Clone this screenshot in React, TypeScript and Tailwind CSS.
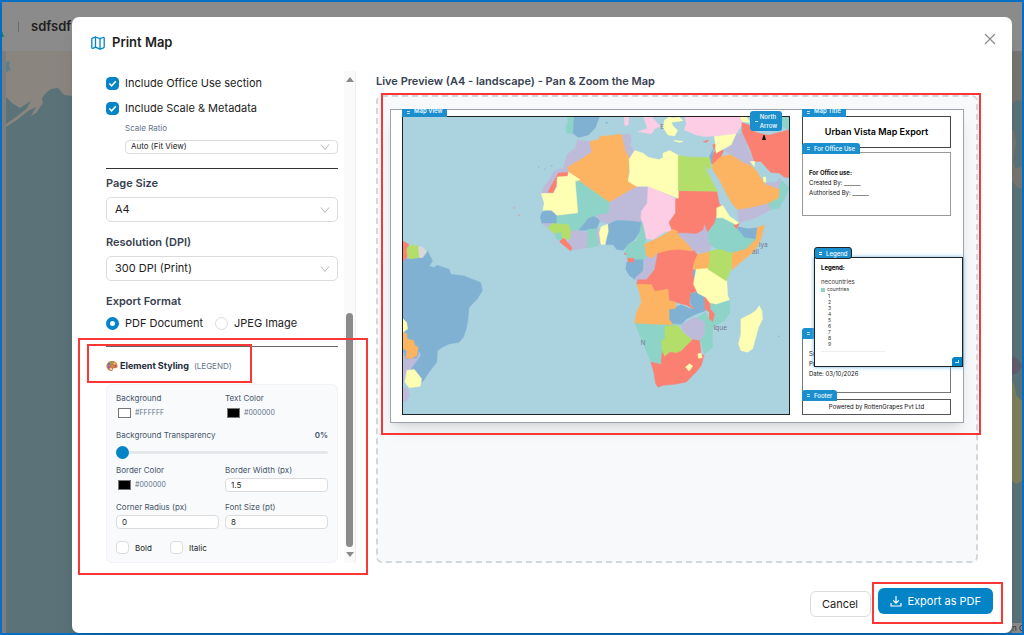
import { useState } from "react";

// Countries on a 3x grid of the map frame, in drawing order.
const COUNTRIES: { fill: string; shapes: string[] }[] = [
  {
    fill: "#80b1d3",
    shapes: [
      "M66 510L110 505 140 485 155 515 145 530 160 535 168 528 205 540 210 555 250 560 275 570 300 580 305 605 290 630 265 655 262 690 258 715 248 745 235 760 205 765 185 775 170 785 168 820 145 850 125 880 90 850 66 840Z",
      "M580 76L660 76 645 115 625 135 595 143 578 130Z",
      "M485 370L498 361 510 362 530 378 532 402 485 402 480 382Z",
      "M595 425L605 400 622 388 640 378 660 392 650 418 622 422Z",
      "M683 405L710 392 745 393 785 395 790 410 765 450 745 465 730 483 710 480 700 466 678 465Z",
      "M1076 412L1105 418 1135 415 1130 450 1095 445 1075 425Z",
      "M740 520L760 505 790 510 790 545 765 571 748 558 738 540Z",
      "M868 660L905 648 930 658 945 660 932 640 932 612 955 610 982 625 978 665 950 675 920 690 905 707 880 707 868 695Z",
      "M938 543L955 540 950 570 940 570Z",
      "M990 200L1000 180 1003 205 996 222Z",
    ],
  },
  {
    fill: "#8dd3c7",
    shapes: [
      "M560 76L580 76 578 130 560 130 557 108 564 95Z",
      "M1208 76L1235 76 1235 122 1210 110Z",
      "M1165 335L1198 325 1200 298 1198 275 1210 275 1230 295 1215 330 1200 355 1175 360Z",
      "M585 273L600 268 690 335 688 370 650 378 625 385 605 410 590 425 570 425 568 405 530 402 530 377 593 370Z",
      "M1010 385L1030 382 1065 395 1068 415 1080 425 1095 445 1132 450 1100 480 1060 492 1020 484 990 465 985 430 1000 410Z",
      "M785 398L797 410 800 440 793 470 803 490 812 510 743 510 735 485 745 465 770 455 780 430Z",
      "M622 420L652 418 655 470 620 476Z",
      "M990 645L1012 645 1050 635 1052 670 1035 695 1000 715 998 760 1000 775 975 795 962 752 975 735 975 700 950 690 978 670 990 690Z",
      "M765 702L830 705 905 705 880 712 856 712 856 750 846 752 846 822 825 827 812 815 795 775Z",
    ],
  },
  {
    fill: "#bebada",
    shapes: [
      "M66 790L75 812 108 808 115 790 119 800 90 840 75 860 66 885Z",
      "M66 895L80 900 87 920 78 935 66 942Z",
      "M592 150L632 155 635 187 600 210 565 232 565 248 530 262 520 290 503 310 483 310 495 285 505 275 520 245 550 235 560 195 585 175Z",
      "M725 135L752 132 755 155 750 165 762 182 748 207 735 180Z",
      "M1070 133L1090 130 1102 150 1102 170 1123 215 1115 227 1090 218 1055 195 1033 182 1058 165Z",
      "M1075 360L1120 352 1165 338 1175 360 1130 385 1078 400Z",
      "M1160 280L1190 278 1205 265 1200 292 1185 297 1165 290Z",
      "M690 335L770 288 807 292 803 340 785 365 783 397 745 392 710 390 685 402 660 395 650 378 688 370Z",
      "M895 435L920 428 950 432 970 422 972 403 985 427 985 455 995 470 990 487 960 490 930 480Z",
      "M570 425L600 423 622 430 620 475 575 483 565 460Z",
      "M650 420L663 422 664 463 654 465Z",
      "M485 402L515 402 500 415Z",
      "M795 510L815 490 835 490 827 530 800 572 770 577 765 567 790 545Z",
      "M905 707L945 685 975 700 975 735 962 752 935 752 910 725Z",
    ],
  },
  {
    fill: "#fccde5",
    shapes: [
      "M732 76L748 76 745 105 735 107Z",
      "M790 76L812 76 842 110 825 116 815 132 775 125 803 116Z",
      "M915 76L1090 76 1087 105 1070 132 1040 135 1005 138 975 140 950 135 915 120 920 100Z",
      "M805 290L888 326 888 370 868 395 875 425 855 428 820 450 800 448 790 402 783 385 785 365 803 340Z",
    ],
  },
  {
    fill: "#fb8072",
    shapes: [
      "M66 455L83 465 78 505 66 515Z",
      "M1088 98L1110 105 1130 128 1170 135 1200 128 1235 118 1235 265 1215 262 1200 250 1175 248 1145 215 1125 215 1115 185 1100 150 1088 125Z",
      "M1002 190L1010 180 1033 182 1025 200 1010 222 998 222ZM1000 165L1010 162 1004 182Z",
      "M971 155L988 151 980 158Z",
      "M535 250L565 248 565 261 531 262 528 290 518 310 503 308 515 285Z",
      "M896 303L1012 305 1020 345 1032 350 1010 380 1005 400 985 427 975 403 970 422 950 432 920 430 900 430 885 437 868 400 888 370 888 328 896 326Z",
      "M1063 407L1080 402 1072 418Z",
      "M538 457L550 443 575 475 572 485Z",
      "M743 507L762 507 762 518 745 518Z",
      "M835 488L880 477 945 485 958 500 955 520 940 545 940 560 952 607 932 612 930 645 945 660 920 648 890 640 868 633 865 600 825 607 815 587 770 585 775 572 800 572 825 540Z",
      "M975 625L990 625 992 660 1005 675 1000 697 990 690 990 670 977 660Z",
      "M813 820L844 827 848 785 855 802 870 790 905 785 938 752 960 755 965 795 974 800 965 830 950 850 920 880 885 887 850 890 835 896 828 885 822 850Z",
    ],
  },
  {
    fill: "#fdb462",
    shapes: [
      "M66 728L78 735 78 750 98 755 102 770 112 775 108 800 90 810 75 807 78 785 66 780Z",
      "M630 155L660 140 725 133 735 180 748 205 745 275 770 290 688 337 565 250 563 232 600 210 635 187Z",
      "M998 225L1025 200 1055 195 1090 218 1115 228 1130 240 1145 265 1160 285 1200 298 1198 325 1165 342 1120 352 1075 360 1060 345 1040 310 1020 270 1000 240Z",
      "M1135 413L1156 408 1145 450 1125 485 1080 522 1058 542 1055 507 1060 490 1100 480 1130 450Z",
      "M955 495L990 488 992 520 986 540 940 540 945 515Z",
      "M795 465L815 455 842 443 880 420 893 425 895 437 925 465 940 485 900 480 870 482 830 492 820 505 800 500Z",
      "M770 585L815 587 825 607 865 600 868 635 888 640 888 658 868 660 868 690 880 707 820 705 765 702 770 670 785 640 780 610Z",
    ],
  },
  {
    fill: "#ffffb3",
    shapes: [
      "M66 690L77 700 80 720 66 730Z",
      "M78 845L100 842 122 870 118 893 85 897 72 880Z",
      "M855 90L868 82 880 84 900 82 910 92 875 97 880 108 894 122 885 138 865 135 850 112ZM882 152L910 154 900 158Z",
      "M1080 76L1102 82 1112 97 1090 95Z",
      "M1005 140L1070 132 1055 165 1030 178 1010 190 1008 160Z",
      "M1113 215L1127 215 1125 230ZM1153 262L1160 262 1160 278 1153 275Z",
      "M748 208L765 182 790 190 805 202 838 210 850 203 850 190 870 182 897 197 896 326 805 290 770 290 745 275 750 245Z",
      "M483 312L520 311 531 290 531 262 563 260 565 247 600 270 585 275 593 370 530 377 515 362 488 362 492 340Z",
      "M1012 355L1030 347 1050 380 1078 400 1070 405 1030 385 1012 385Z",
      "M664 412L683 404 685 425 675 465 663 465 658 430Z",
      "M950 540L988 538 1042 575 1045 620 1050 632 1010 645 990 640 980 625 955 612 942 585Z",
      "M1140 650L1148 665 1150 690 1138 715 1120 780 1105 790 1085 785 1078 765 1085 735 1085 690 1115 675 1130 665Z",
      "M918 835L930 825 940 832 928 847ZM955 795L965 793 968 807 957 808Z",
    ],
  },
  {
    fill: "#b3de69",
    shapes: [
      "M78 475L92 467 113 470 115 505 85 508 78 495Z",
      "M896 198L935 202 990 203 995 235 985 238 972 218 980 240 1014 305 896 303Z",
      "M503 415L515 402 565 405 572 425 568 450 545 445 530 440Z",
      "M990 485L1020 480 1058 492 1055 540 1040 575 986 540 992 510Z",
      "M856 712L895 710 915 735 938 752 905 785 890 792 870 788 855 802 848 785 845 755 856 750Z",
    ],
  },
  { fill: "#d9d9d9", shapes: ["M113 470L128 475 138 488 125 505 115 505Z"] },
  { fill: "#8dd3c7", shapes: ["M525 432L543 430 545 450 530 452Z"] },
  { fill: "#aad3df", shapes: ["M1130 76L1190 76 1192 125 1170 134 1140 128Z", "M632 138L660 134 655 148 632 152Z"] },
];

const WorldMap = () => (
  <svg viewBox="66 81 1164 894" preserveAspectRatio="xMidYMid slice" className="absolute inset-0 h-full w-full bg-[#aad3df]">
    {COUNTRIES.map((c, i) => (
      <path key={i} d={c.shapes.join("")} fill={c.fill} stroke={c.fill} strokeWidth="1.5" strokeLinejoin="round" />
    ))}
    <g fill="#fb8072">
      <circle cx="401" cy="355" r="2" />
      <circle cx="416" cy="377" r="2" />
      <circle cx="736" cy="493" r="3" />
    </g>
    <g fill="#80b1d3">
      <circle cx="475" cy="231" r="2" />
      <circle cx="494" cy="238" r="2" />
      <circle cx="515" cy="228" r="2" />
      <circle cx="680" cy="98" r="3" />
      <circle cx="1199" cy="742" r="2" />
    </g>
    <g fill="#77748c" fontFamily="Noto Sans, sans-serif" fontSize="20">
      <text x="1139" y="473">iya</text>
      <text x="1118" y="494">all</text>
      <text x="1002" y="724">ique</text>
      <text x="782" y="768">N</text>
      <text x="842" y="116">E</text>
    </g>
  </svg>
);

const MapIcon = () => (
  <svg viewBox="0 0 16 16" className="h-4 w-4" fill="none" stroke="#0284c7" strokeWidth="1.3" strokeLinejoin="round" strokeLinecap="round">
    <path d="M1.800 4v8.500c0 .8.500 1 1.100.8L5.500 12.200 10 14.200l3.500-1.400c.5-.2.7-.6.7-1V3.300c0-.8-.5-1-1.100-.8L10 3.700 5.500 2 2.500 3.200c-.5.2-.7.4-.7.8z" />
    <path d="M5.500 2v10.200M10 3.700v10.300" />
  </svg>
);

const Chevron = () => (
  <svg viewBox="0 0 10 10" className="pointer-events-none absolute top-1/2 right-2 h-2.5 w-2.5 -translate-y-1/2" fill="none" stroke="#b4b4b4">
    <path d="M1 2.500L5 7.500 9 2.500" />
  </svg>
);

const Palette = () => (
  <svg viewBox="0 0 12 12" className="h-3 w-3">
    <path d="M6 1C2.700 1 .5 3.300.5 6S2.700 11 5.500 11c1.800 0 1-1.700 1.900-2.400C8.500 7.700 11.500 9 11.500 6S9.200 1 6 1z" fill="#c9824f" />
    <circle cx="3" cy="4.300" r="1.100" fill="#3b82c4" />
    <circle cx="5.700" cy="2.800" r="1.100" fill="#62b34a" />
    <circle cx="8.500" cy="3.600" r="1.100" fill="#f5c542" />
    <circle cx="2.700" cy="7" r="1.100" fill="#a04cc0" />
    <circle cx="9.600" cy="6" r="1" fill="#e5484d" />
    <circle cx="5" cy="9" r="1" fill="#f3e9dc" />
  </svg>
);

const SelectBox = ({ id, value, small }: { id: string; value: string; small?: boolean }) => (
  <div className="relative">
    <select
      id={id}
      className={
        small
          ? "block h-3.5 w-full appearance-none rounded border border-[#dcdcdc] bg-white px-[5px] pb-0.5 text-[8px] leading-[10px] text-[#222]"
          : "block h-[25px] w-full appearance-none rounded-[5px] border border-[#dcdcdc] bg-white px-2 text-[11px] text-[#222]"
      }
    >
      <option>{value}</option>
    </select>
    <Chevron />
  </div>
);

const CheckRow = ({ label }: { label: string }) => (
  <label className="flex h-[25px] items-center gap-1.5 text-[11px] text-[#222]">
    <span className="relative h-[13px] w-[13px]">
      <input type="checkbox" defaultChecked className="block h-[13px] w-[13px] appearance-none rounded-[4px] border border-[#d9d9d9] bg-white checked:border-[#0284c7] checked:bg-[#0284c7]" />
      <svg viewBox="0 0 13 13" className="pointer-events-none absolute inset-0" fill="none" stroke="#fff" strokeWidth="1.6">
        <path d="M3.300 6.500L5.600 8.800 9.800 4.300" />
      </svg>
    </span>
    {label}
  </label>
);

const ColorField = ({ id, label, value }: { id: string; label: string; value: string }) => (
  <div>
    <label htmlFor={id} className="block h-4 leading-4">{label}</label>
    <div className="flex h-3.5 items-center gap-1 pl-0.5 text-[7px] text-[#64748b]">
      <input
        id={id}
        type="color"
        defaultValue={value}
        className="block h-2.5 w-[13px] appearance-none border border-[#777] p-0 [&::-webkit-color-swatch]:border-0 [&::-webkit-color-swatch-wrapper]:p-0"
      />
      {value.toUpperCase()}
    </div>
  </div>
);

const NumberField = ({ id, label, value }: { id: string; label: string; value: string }) => (
  <div>
    <label htmlFor={id} className="block h-4 leading-4">{label}</label>
    <input id={id} defaultValue={value} className="block h-3.5 w-full rounded border border-[#dcdcdc] bg-white px-[5px] text-[8px] text-[#222]" />
  </div>
);

// Drag handle that sits on top of each print element
const Tag = ({ children }: { children?: string }) => (
  <div className="absolute -top-2.5 -left-px flex h-[11px] min-w-[30px] items-center gap-1 rounded-t-[3px] bg-[#1b8fce] px-[5px] text-[6px] font-medium whitespace-nowrap text-white">
    <span className="h-[3px] w-[3px] border-y border-white/70" />
    {children}
  </div>
);

// Same handle, cut off by the edge of the paper
const ClippedTag = ({ children }: { children: string }) => (
  <div className="absolute -top-2 -left-px flex h-2 items-end gap-1 overflow-hidden bg-[#1b8fce] px-[5px] pb-0.5 text-[6px] leading-[8px] font-medium text-white">
    <span className="mb-px h-[3px] w-[3px] border-y border-white/70" />
    {children}
  </div>
);

const Backdrop = () => (
  <div className="absolute inset-0 flex flex-col">
    <header className="flex h-[49px] shrink-0 items-center bg-[#8b8b8b] shadow-md">
      <svg viewBox="0 0 2 12" className="mt-3 h-3 w-0.5">
        <path d="M0 4L2 10H0z" fill="#157f70" />
      </svg>
      <span className="ml-3.5 h-2.5 w-px bg-[#6b6b6b]" />
      <span className="ml-3 text-[13px] font-semibold text-[#1f1f1f]">sdfsdf</span>
    </header>
    <div className="flex flex-1 justify-between border-l-4 border-[#7d7d7d] bg-[#5b7279]">
      <svg viewBox="0 0 68 80" className="h-20 w-[68px]" fill="#8a857f">
        <path d="M0 0H68V45L58 44 52 37 45 38 40 42 36 47 37 52 30 62 25 65 30 56 22 60 12 68 0 76V73L10 66 20 58 25 50 14 57 6 52 0 46z" />
        <path d="M0 11L4 10 3 15 5 19 0 21z" fill="#5b7f8c" />
      </svg>
      <div className="flex w-2.5 flex-col justify-between">
        <svg viewBox="0 0 10 434" className="h-[434px] w-2.5">
          <path d="M0 0H10V50L5 49 0 53z" fill="#77756f" />
          <path d="M0 80L2 79 4 92 1 110 4 118 10 115V138L5 136 0 130z" fill="#77756f" />
          <path d="M0 305Q7 307 10 316L5 322 0 324z" fill="#625c6d" />
          <path d="M0 330L3 336 4 344 10 350V430L4 433 0 430z" fill="#7d805b" />
        </svg>
        <p className="h-[10px] overflow-hidden bg-[#8b8b8b] text-[8px] leading-[10px] whitespace-nowrap text-[#333]">n C</p>
      </div>
    </div>
  </div>
);

export default function App() {
  const [format, setFormat] = useState("pdf");
  const [transparency, setTransparency] = useState(0);

  return (
    <div className="relative flex min-h-screen border-2 border-[#0870c4] font-[Inter,sans-serif] leading-normal">
      <Backdrop />

      <main className="relative mt-[15px] mr-2.5 ml-[70px] flex flex-1 flex-col rounded-[7px] bg-white shadow-xl">
        <header className="flex h-[51px] items-center justify-between pr-4 pl-[18px]">
          <h1 className="flex items-center gap-1.5 text-[13px] font-semibold text-[#1f1f1f]">
            <MapIcon />
            Print Map
          </h1>
          <button aria-label="Close" className="mb-2">
            <svg viewBox="0 0 12 12" className="h-3 w-3" stroke="#888" strokeWidth="1.100">
              <path d="M1 1L11 11M11 1L1 11" />
            </svg>
          </button>
        </header>

        <div className="flex gap-5 pr-[34px] pl-[34px]">
          <aside className="flex w-[250px] shrink-0 gap-1.5 pt-[3px]">
            <div className="relative flex-1">
              <CheckRow label="Include Office Use section" />
              <CheckRow label="Include Scale & Metadata" />
              <div className="pl-[19px]">
                <label htmlFor="scale" className="block h-[19px] text-[8px] leading-[14px] text-[#64748b]">Scale Ratio</label>
                <SelectBox id="scale" value="Auto (Fit View)" small />
              </div>
              <hr className="mt-3.5 border-[#333]" />

              <label htmlFor="size" className="mt-1.5 block h-[22px] text-[11px] font-semibold text-[#374151]">Page Size</label>
              <SelectBox id="size" value="A4" />
              <label htmlFor="dpi" className="mt-3 block h-[22px] text-[11px] font-semibold text-[#374151]">Resolution (DPI)</label>
              <SelectBox id="dpi" value="300 DPI (Print)" />

              <fieldset className="mt-3 text-[11px] text-[#222]">
                <legend className="h-[22px] font-semibold text-[#374151]">Export Format</legend>
                <div className="flex h-[17px] items-center gap-3">
                  <label className="flex items-center gap-1.5">
                    <input type="radio" name="format" checked={format === "pdf"} onChange={() => setFormat("pdf")} className="h-[13px] w-[13px] appearance-none rounded-full border border-[#dcdcdc] bg-white checked:border-4 checked:border-[#0284c7]" />
                    PDF Document
                  </label>
                  <label className="flex items-center gap-1.5">
                    <input type="radio" name="format" checked={format === "jpeg"} onChange={() => setFormat("jpeg")} className="h-[13px] w-[13px] appearance-none rounded-full border border-[#dcdcdc] bg-white checked:border-4 checked:border-[#0284c7]" />
                    JPEG Image
                  </label>
                </div>
              </fieldset>

              <section className="relative mt-3.5">
                <hr className="border-[#666]" />
                <h2 className="flex h-[37px] items-center gap-0.5 text-[9px] font-bold text-[#1e293b]">
                  <Palette />
                  Element Styling
                  <span className="ml-[3px] text-[8px] font-normal text-[#64748b]">(LEGEND)</span>
                </h2>

                <div className="grid grid-cols-2 gap-x-1.5 gap-y-[7px] rounded-md border border-[#f1f3f6] bg-[#f8fafc] px-[9px] pt-[5px] pb-2 text-[8px] text-[#475569]">
                  <ColorField id="bg" label="Background" value="#ffffff" />
                  <ColorField id="text" label="Text Color" value="#000000" />
                  <div className="col-span-2">
                    <div className="flex h-4 items-center justify-between">
                      <label htmlFor="alpha">Background Transparency</label>
                      <span className="font-semibold">{transparency}%</span>
                    </div>
                    <input
                      id="alpha"
                      type="range"
                      value={transparency}
                      onChange={(e) => setTransparency(Number(e.target.value))}
                      className="mt-[3px] -mb-[3px] block h-3 w-full appearance-none bg-transparent [&::-webkit-slider-runnable-track]:h-[3px] [&::-webkit-slider-runnable-track]:rounded-full [&::-webkit-slider-runnable-track]:bg-[#e5e7eb] [&::-webkit-slider-thumb]:-mt-[5px] [&::-webkit-slider-thumb]:h-[13px] [&::-webkit-slider-thumb]:w-[13px] [&::-webkit-slider-thumb]:appearance-none [&::-webkit-slider-thumb]:rounded-full [&::-webkit-slider-thumb]:bg-[#0284c7]"
                    />
                  </div>
                  <ColorField id="border" label="Border Color" value="#000000" />
                  <NumberField id="bw" label="Border Width (px)" value="1.5" />
                  <NumberField id="radius" label="Corner Radius (px)" value="0" />
                  <NumberField id="fs" label="Font Size (pt)" value="8" />
                  <div className="col-span-2 flex h-[18px] items-end gap-[18px] text-[#222]">
                    <label className="flex items-center gap-1.5">
                      <input type="checkbox" className="h-[13px] w-[13px] appearance-none rounded-[4px] border border-[#dcdcdc] bg-white checked:bg-[#0284c7]" />
                      Bold
                    </label>
                    <label className="flex items-center gap-1.5">
                      <input type="checkbox" className="h-[13px] w-[13px] appearance-none rounded-[4px] border border-[#dcdcdc] bg-white checked:bg-[#0284c7]" />
                      Italic
                    </label>
                  </div>
                </div>

                <div className="pointer-events-none absolute -top-2 -right-[30px] -bottom-3 -left-7 border-2 border-[#fb3636]" />
                <div className="pointer-events-none absolute -top-0.5 -left-[19px] h-[39px] w-[165px] border-2 border-[#fb3636]" />
              </section>
            </div>

            <div className="flex w-3 flex-col items-center border-r border-[#eee] bg-[#fafafa] py-1.5">
              <div className="border-x-4 border-b-[5px] border-x-transparent border-b-[#8a8a8a]" />
              <div className="mt-auto h-[234px] w-[7px] rounded-full bg-[#8a8a8a]" />
              <div className="mt-[5px] border-x-4 border-t-[5px] border-x-transparent border-t-[#8a8a8a]" />
            </div>
          </aside>

          <section className="flex flex-1 flex-col pt-[5px]">
            <h2 className="h-[22px] text-[11px] font-semibold text-[#374151]">Live Preview (A4 - landscape) - Pan & Zoom the Map</h2>
            <div className="relative flex-1 rounded-md border-2 border-dashed border-[#d3d6db] bg-[#f8f9fb] px-3 py-3">
              <div className="flex aspect-[573/313] w-full gap-3 border border-[#9ca3af] bg-white pt-1.5 pr-3 pb-[7px] pl-[11px] shadow-lg">
                <div className="relative flex-1 border border-[#222]">
                  <WorldMap />
                  <ClippedTag>Map View</ClippedTag>
                  <svg viewBox="0 0 6 16" className="absolute top-2.5 right-[22px] h-4 w-1.5" fill="#111">
                    <path d="M2.500 8h1L5 13H1z" />
                  </svg>
                  <div className="absolute -top-1.5 right-[7px] flex h-5 w-8 items-center justify-center gap-0.5 rounded-[3px] bg-[#1b8fce] text-[6px] leading-[9px] font-medium text-white">
                    <span className="h-px w-[3px] bg-white/80" />
                    <span>North<br />Arrow</span>
                  </div>
                </div>

                <div className="flex w-[149px] flex-col text-[6px] text-[#111]">
                  <div className="relative flex h-8 items-center justify-center border border-[#444] text-[9px] font-semibold text-black">
                    <ClippedTag>Map Title</ClippedTag>
                    Urban Vista Map Export
                  </div>
                  <div className="relative mt-1 h-16 border border-[#999] px-1.5 pt-[15px] leading-[10px]">
                    <Tag>For Office Use</Tag>
                    <p className="font-bold">For Office use:</p>
                    <p>Created By: ______</p>
                    <p>Authorised By: ______</p>
                  </div>
                  <div className="relative mt-auto h-14 border border-[#777] px-1.5 pt-[11px] leading-[10px]">
                    <Tag />
                    <p>Scale: Auto</p>
                    <p>Projection: EPSG</p>
                    <p>Date: 03/10/2026</p>
                  </div>
                  <div className="relative mt-1.5 flex h-4 items-center justify-center border border-[#555]">
                    <Tag>Footer</Tag>
                    Powered by RottenGrapes Pvt Ltd
                  </div>
                </div>
              </div>

              <div className="absolute top-40 right-[13px] h-[110px] w-[149px] border border-[#222] bg-white px-1.5 pt-[5px] text-[5px] text-[#333] shadow-[0_0_4px_#60b5e8]">
                <div className="absolute -top-[11px] -left-px flex h-3 items-center gap-1 rounded-[3px] border border-[#222] bg-[#1b8fce] px-1 text-[6px] font-medium text-white">
                  <span className="h-[3px] w-[3px] border-y border-white" />
                  Legend
                </div>
                <p className="text-[6px] leading-[10px] font-bold text-black">Legend:</p>
                <p className="mt-[5px] text-[6px] leading-[7px]">necountries</p>
                <p className="mt-px flex items-center gap-0.5 leading-[7px]">
                  <span className="h-1 w-1 bg-[#8dd3c7]" />
                  countries
                </p>
                <ul className="w-16 border-b border-[#eee] pb-1 pl-[7px] leading-[6px]">
                  {[1, 2, 3, 4, 5, 6, 7, 8, 9].map((n) => (
                    <li key={n}>{n}</li>
                  ))}
                </ul>
                <div className="absolute right-0 bottom-0 flex h-[9px] w-2.5 items-center justify-center rounded-tl-[3px] bg-[#0284c7]">
                  <span className="h-[3px] w-1 border-r border-b border-white/80" />
                </div>
              </div>

              <div className="pointer-events-none absolute -top-1 -right-[5px] left-[3px] h-[342px] border-2 border-[#fb3636]" />
            </div>
          </section>
        </div>

        <footer className="mt-5 flex items-start justify-end pr-[19px]">
          <button className="mt-2 mr-[7px] h-[26px] w-[61px] rounded-md border border-[#dcdcdc] bg-white text-[11px] text-[#222]">Cancel</button>
          <div className="relative">
            <button className="mt-[5px] flex h-[26px] items-center gap-1.5 rounded-md bg-[#0284c7] px-3 text-[11px] text-white">
              <svg viewBox="0 0 12 12" className="h-3 w-3" fill="none" stroke="#fff" strokeWidth="1.200">
                <path d="M6 1V8M3.200 5.300L6 8.100 8.800 5.300M1 8V11H11V8" />
              </svg>
              Export as PDF
            </button>
            <div className="pointer-events-none absolute -top-px -right-2.5 -bottom-2.5 -left-1.5 border-2 border-[#fb3636]" />
          </div>
        </footer>
      </main>
    </div>
  );
}
